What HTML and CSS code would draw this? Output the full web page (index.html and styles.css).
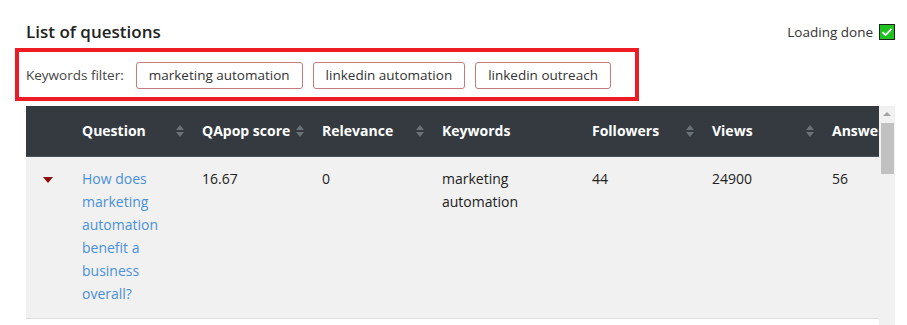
FILE: index.html
```html
<!DOCTYPE html>
<html lang="en">
<head>
    <meta charset="UTF-8">
    <title>List of questions</title>
    <link rel="stylesheet" href="styles.css">
</head>
<body>
    <div class="page">
        <div class="topbar">
            <h2 class="title">List of questions</h2>
            <div class="status">
                <span>Loading done</span>
                <span class="check">
                    <svg width="12" height="10" viewBox="0 0 12 10"><path d="M1.5 5.2 L4.6 8 L10.5 1.8" fill="none" stroke="#fff" stroke-width="1.8"/></svg>
                </span>
            </div>
        </div>

        <div class="filter">
            <span class="filter-label">Keywords filter:</span>
            <button class="kw">marketing automation</button>
            <button class="kw">linkedin automation</button>
            <button class="kw">linkedin outreach</button>
        </div>

        <div class="grid-wrap">
            <div class="grid-view">
                <table class="grid">
                    <colgroup>
                        <col style="width: 44px">
                        <col style="width: 120px">
                        <col style="width: 120px">
                        <col style="width: 120px">
                        <col style="width: 150px">
                        <col style="width: 120px">
                        <col style="width: 120px">
                        <col style="width: 120px">
                    </colgroup>
                    <thead>
                        <tr>
                            <th></th>
                            <th><div class="th-in">Question<i class="sort"></i></div></th>
                            <th><div class="th-in">QApop score<i class="sort"></i></div></th>
                            <th><div class="th-in">Relevance<i class="sort"></i></div></th>
                            <th><div class="th-in">Keywords</div></th>
                            <th><div class="th-in">Followers<i class="sort"></i></div></th>
                            <th><div class="th-in">Views<i class="sort"></i></div></th>
                            <th><div class="th-in">Answers<i class="sort"></i></div></th>
                        </tr>
                    </thead>
                    <tbody>
                        <tr>
                            <td class="toggle"><i class="caret"></i></td>
                            <td><a href="#">How does marketing automation benefit a business overall?</a></td>
                            <td>16.67</td>
                            <td>0</td>
                            <td>marketing automation</td>
                            <td>44</td>
                            <td>24900</td>
                            <td>56</td>
                        </tr>
                    </tbody>
                </table>
            </div>
            <div class="scrollbar">
                <i class="scroll-up"></i>
                <div class="thumb"></div>
            </div>
        </div>
    </div>
</body>
</html>
```

FILE: styles.css
```css
html,
body {
    margin: 0;
    padding: 0;
}

body {
    font: 14px 'Open Sans', 'Liberation Sans', sans-serif;
    color: #212529;
    background: #fff;
}

button {
    margin: 0;
    font-family: inherit;
    -webkit-appearance: none;
    appearance: none;
}

.page {
    padding: 0 12px 0 26px;
}

/* title + status */
.topbar {
    display: flex;
    justify-content: space-between;
    align-items: center;
    height: 48px;
    padding-top: 16px;
    box-sizing: border-box;
}

.title {
    margin: 0;
    font-size: 17px;
    font-weight: 600;
    color: #222;
    line-height: 32px;
}

.status {
    display: flex;
    align-items: center;
    gap: 6px;
    font-size: 13.5px;
    color: #333;
    margin-top: -1px;
}

.check {
    display: flex;
    align-items: center;
    justify-content: center;
    width: 14px;
    height: 14px;
    background: #1fc31f;
    border: 1px solid #222;
}

/* keywords filter */
.filter {
    display: flex;
    align-items: center;
    gap: 10px;
    width: 624px;
    height: 53px;
    box-sizing: border-box;
    margin-left: -11px;
    padding: 1px 7px 0;
    border: 4px solid #ed1c24;
    font-size: 13.5px;
    color: #444;
}

.filter-label {
    margin-right: 2px;
}

.kw {
    height: 27px;
    padding: 0 12px;
    border: 1px solid #c47c7c;
    border-radius: 3px;
    background: #fff;
    font-size: 13.5px;
    color: #333;
}

/* table */
.grid-wrap {
    display: flex;
    margin-top: 5px;
    height: 230px;
}

.grid-view {
    width: 853px;
    overflow: hidden;
}

.grid {
    table-layout: fixed;
    width: 914px;
    border-collapse: collapse;
}

.grid th {
    height: 50px;
    padding: 0 0 0 12px;
    background: #343a40;
    border-bottom: 1px solid #4a5057;
    color: #fff;
    font-weight: 700;
    font-size: 14px;
    text-align: left;
    box-sizing: border-box;
}

.th-in {
    display: flex;
    align-items: center;
    justify-content: space-between;
    padding-right: 6px;
    white-space: nowrap;
}

.sort {
    display: flex;
    flex-direction: column;
    gap: 2px;
}

.sort::before,
.sort::after {
    content: "";
    border-left: 4px solid transparent;
    border-right: 4px solid transparent;
}

.sort::before {
    border-bottom: 5px solid #6b7178;
}

.sort::after {
    border-top: 5px solid #6b7178;
}

.grid td {
    vertical-align: top;
    padding: 10px 12px 13px;
    background: #f1f1f1;
    border-bottom: 1px solid #dedede;
    line-height: 23px;
    font-size: 14px;
    color: #222;
}

.grid td.toggle {
    padding: 0;
}

.caret {
    display: block;
    width: 0;
    margin: 20px auto 0;
    border-left: 5px solid transparent;
    border-right: 5px solid transparent;
    border-top: 6px solid #8b0a0a;
}

.grid a {
    color: #4a90d9;
    text-decoration: none;
}

/* fake scrollbar */
.scrollbar {
    width: 16px;
    background: #f1f1f1;
    display: flex;
    flex-direction: column;
    align-items: center;
}

.scroll-up {
    margin-top: 6px;
    border-left: 4px solid transparent;
    border-right: 4px solid transparent;
    border-bottom: 4px solid #a3a3a3;
}

.thumb {
    margin-top: 7px;
    width: 13px;
    height: 51px;
    background: #c1c1c1;
}
```
